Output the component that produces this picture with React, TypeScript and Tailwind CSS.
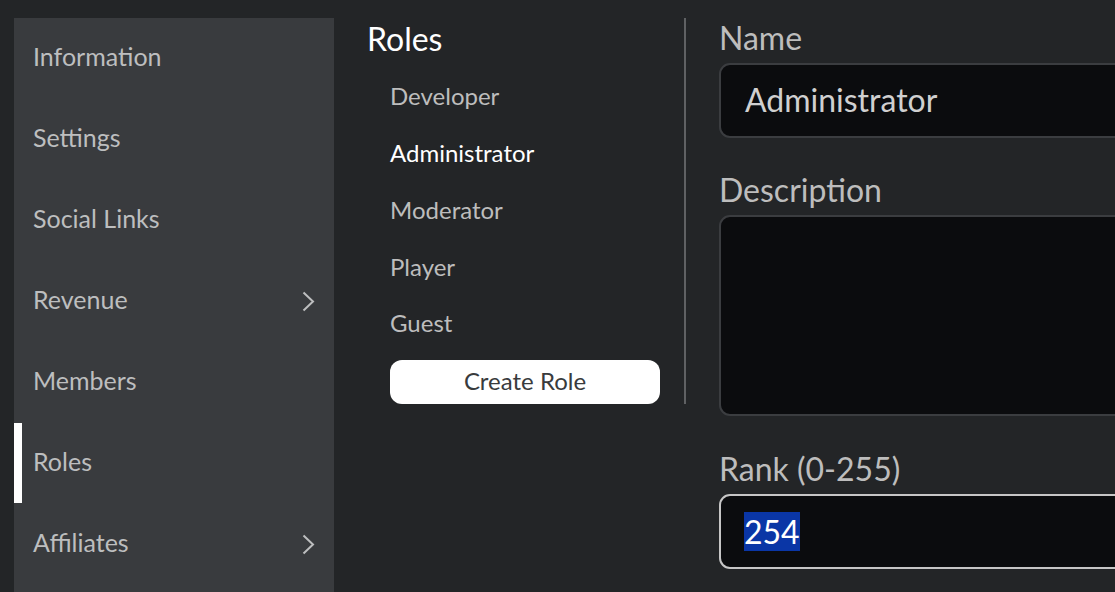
import { ReactNode } from "react";

const FONT = "font-['Lato','Noto_Sans',sans-serif]";

const navItems = [
  { label: "Information" },
  { label: "Settings" },
  { label: "Social Links" },
  { label: "Revenue", chevron: true },
  { label: "Members" },
  { label: "Roles", active: true },
  { label: "Affiliates", chevron: true },
];

const roles = ["Developer", "Administrator", "Moderator", "Player", "Guest"];

export default function App() {
  return (
    <div
      className={`flex h-[592px] w-full overflow-hidden bg-[#232527] pl-[14px] pt-[18px] ${FONT}`}
    >
      <Sidebar />

      <section className="flex w-[352px] shrink-0 self-start">
        <div className="w-[350px] pl-[33px]">
          <h1 className="flex h-[44px] items-center pb-[2px] text-[32px] text-white">Roles</h1>
          <ul className="mt-[7px] pl-[23px]">
            {roles.map((role) => (
              <li
                key={role}
                className={`flex h-[56.75px] items-center pb-[2px] text-[24px] ${
                  role === "Administrator" ? "text-white" : "text-[#bdbdbd]"
                }`}
              >
                {role}
              </li>
            ))}
          </ul>
          <button className="ml-[23px] mt-[7px] flex h-[44px] w-[270px] items-center justify-center rounded-[12px] bg-white pb-[2px] text-[24px] text-[#393b3d]">
            Create Role
          </button>
        </div>
        <div className="w-[2px] bg-[#5f6163]" />
      </section>

      <section className="w-[480px] shrink-0 pl-[33px]">
        <Field label="Name">
          <div className="flex h-[75px] items-center rounded-[11px] border-2 border-[#3b3d40] bg-[#0b0c0e] pb-[2px] pl-[24px] text-[32px] text-[#d0d0d0]">
            Administrator
          </div>
        </Field>
        <Field label="Description" className="mt-[32px]">
          <div className="h-[201px] rounded-[11px] border-2 border-[#3b3d40] bg-[#0b0c0e]" />
        </Field>
        <Field label="Rank (0-255)" className="mt-[33px]">
          <div className="flex h-[75px] items-center rounded-[11px] border-2 border-[#c6c6c6] bg-[#0b0c0e] pl-[23px]">
            <span className="bg-[#0a36a6] text-[32px] leading-[39px] text-white">254</span>
          </div>
        </Field>
      </section>
    </div>
  );
}

function Sidebar() {
  return (
    <nav className="h-[574px] w-[320px] shrink-0 bg-[#393b3e]">
      {navItems.map((item) => (
        <div key={item.label} className="relative flex h-[81px] items-center pl-[19px] pr-[19px]">
          {item.active && <span className="absolute left-0 top-0 h-[80px] w-[8px] bg-white" />}
          <span className="flex-1 pb-[3px] text-[25px] text-[#bdbebf]">{item.label}</span>
          {item.chevron && (
            <svg width="13" height="21" viewBox="0 0 13 21" fill="none">
              <path d="M1.5 1.5 L11 10.5 L1.5 19.5" stroke="#bdbebf" strokeWidth="2" />
            </svg>
          )}
        </div>
      ))}
    </nav>
  );
}

function Field({
  label,
  className = "",
  children,
}: {
  label: string;
  className?: string;
  children: ReactNode;
}) {
  return (
    <div className={className}>
      <p className="flex h-[45px] items-center pb-[6px] text-[32px] text-[#bdbdbd]">{label}</p>
      {children}
    </div>
  );
}
